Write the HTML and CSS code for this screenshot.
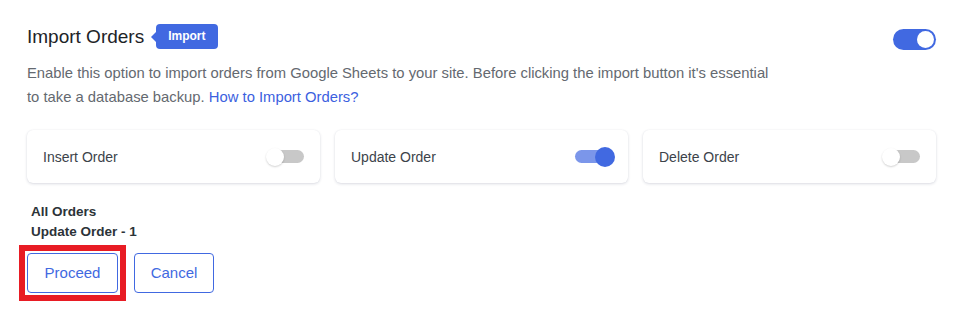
FILE: index.html
```html
<!DOCTYPE html>
<html>
<head>
<meta charset="utf-8">
<link rel="stylesheet" href="styles.css">
</head>
<body>
<div class="panel">
  <div class="head">
    <div class="title-wrap">
      <h2 class="title">Import Orders</h2>
      <span class="badge">Import</span>
    </div>
    <span class="switch big on"><span class="knob"></span></span>
  </div>
  <p class="desc">Enable this option to import orders from Google Sheets to your site. Before clicking the import button it's essential<br>to take a database backup. <a class="link" href="#">How to Import Orders?</a></p>
  <div class="cards">
    <div class="card"><span class="card-label">Insert Order</span><span class="toggle"><span class="tknob"></span></span></div>
    <div class="card"><span class="card-label">Update Order</span><span class="toggle on"><span class="tknob"></span></span></div>
    <div class="card"><span class="card-label">Delete Order</span><span class="toggle"><span class="tknob"></span></span></div>
  </div>
  <div class="summary">
    <div>All Orders</div>
    <div>Update Order - 1</div>
  </div>
  <div class="actions">
    <span class="mark"><button class="btn proceed">Proceed</button></span>
    <button class="btn cancel">Cancel</button>
  </div>
</div>
</body>
</html>
```
FILE: styles.css
```css
html, body {
  margin: 0;
  padding: 0;
  background: #ffffff;
}
body {
  font-family: "Liberation Sans", Arial, sans-serif;
  color: #1d2327;
}
.panel {
  padding: 24px 33px 20px 27px;
}
.head {
  display: flex;
  align-items: center;
  justify-content: space-between;
  height: 25px;
}
.title-wrap {
  display: flex;
  align-items: center;
}
.title {
  margin: 0;
  font-size: 19px;
  font-weight: 400;
  color: #1d2327;
  line-height: 25px;
}
.badge {
  position: relative;
  margin-left: 12px;
  height: 25px;
  padding: 0 12px;
  background: #4169e1;
  color: #ffffff;
  border-radius: 4px;
  font-size: 12px;
  font-weight: 700;
  line-height: 25px;
  display: inline-flex;
  align-items: center;
}
.badge::before {
  content: "";
  position: absolute;
  left: -5px;
  top: 50%;
  margin-top: -5px;
  border-top: 5px solid transparent;
  border-bottom: 5px solid transparent;
  border-right: 5px solid #4169e1;
}
.switch {
  display: inline-flex;
  align-items: center;
  width: 43px;
  height: 21px;
  border-radius: 11px;
  background: #4169e1;
  box-sizing: border-box;
  padding: 2px;
  justify-content: flex-end;
  margin-top: 5px;
}
.switch .knob {
  width: 17px;
  height: 17px;
  border-radius: 50%;
  background: #ffffff;
}
.desc {
  margin: 12px 0 0;
  font-size: 14.8px;
  line-height: 24px;
  color: #646970;
}
.link {
  color: #3c5fe0;
  text-decoration: none;
}
.cards {
  display: grid;
  grid-template-columns: repeat(3, 1fr);
  gap: 15px;
  margin-top: 21px;
}
.card {
  height: 53px;
  border-radius: 6px;
  background: #ffffff;
  box-shadow: 0 1px 3px rgba(30, 40, 80, 0.16), 0 0 1px rgba(30, 40, 80, 0.08);
  display: flex;
  align-items: center;
  justify-content: space-between;
  padding: 0 16px 0 16px;
  box-sizing: border-box;
}
.card-label {
  font-size: 14px;
  color: #3c434a;
}
.toggle {
  position: relative;
  width: 37px;
  height: 13px;
  border-radius: 7px;
  background: #c8c8c8;
}
.tknob {
  position: absolute;
  left: -1px;
  top: 50%;
  margin-top: -9px;
  width: 18px;
  height: 18px;
  border-radius: 50%;
  background: #ffffff;
  box-shadow: 0 1px 2px rgba(0, 0, 0, 0.18);
}
.toggle.on {
  background: #7b96ea;
}
.toggle.on .tknob {
  left: auto;
  right: -3px;
  width: 20px;
  height: 20px;
  margin-top: -10px;
  background: #4169e1;
  box-shadow: none;
}
.summary {
  margin-top: 19px;
  padding-left: 4px;
  font-size: 13.5px;
  font-weight: 700;
  line-height: 20px;
  color: #2c3338;
}
.actions {
  display: flex;
  align-items: center;
  gap: 16px;
  margin-top: 11px;
}
.mark {
  display: inline-flex;
  margin: -8px;
  padding: 2px;
  border: 6px solid #e81c24;
}
.btn {
  height: 40px;
  padding: 0;
  border: 1px solid #4169e1;
  border-radius: 4px;
  background: #ffffff;
  color: #4169e1;
  font-family: "Liberation Sans", Arial, sans-serif;
  font-size: 15px;
  line-height: 38px;
}
.proceed {
  width: 91px;
}
.cancel {
  width: 80px;
}
```
